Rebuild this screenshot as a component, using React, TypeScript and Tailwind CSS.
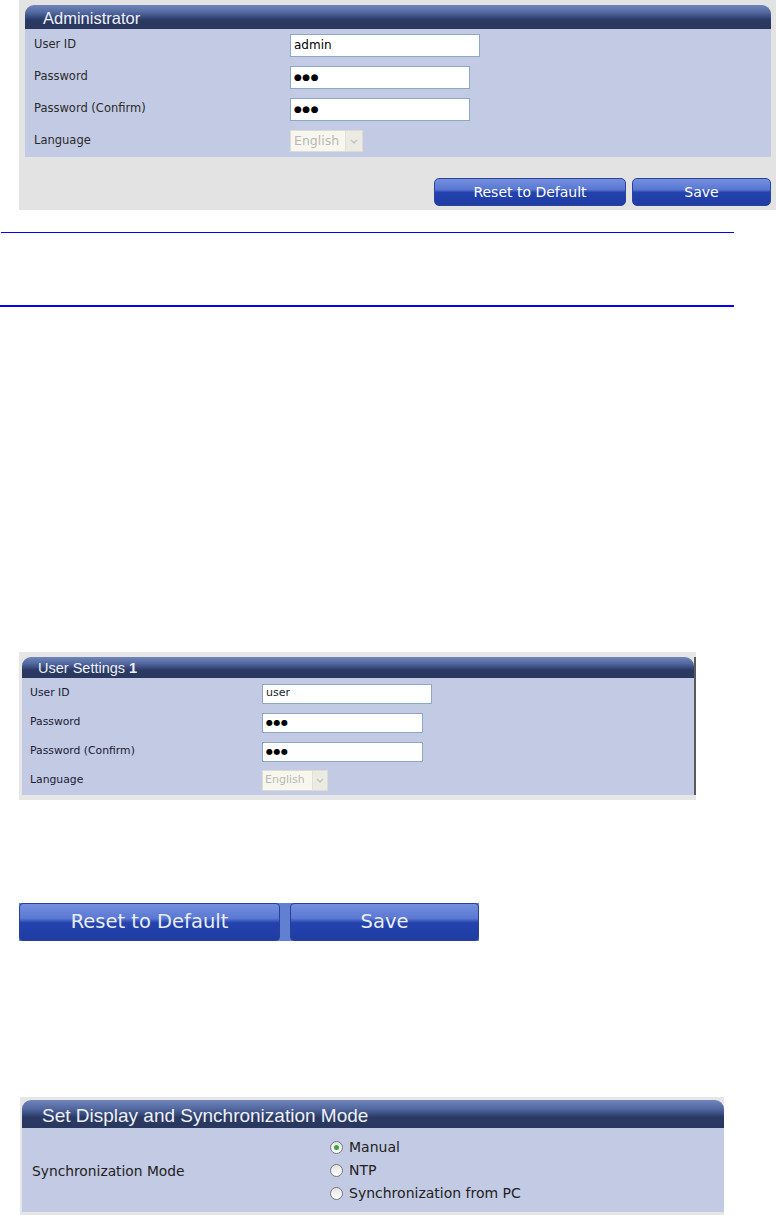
const sans = "font-['DejaVu_Sans','Verdana',sans-serif]";
const arial = "font-['Liberation_Sans',Arial,sans-serif]";

const headerBg =
  'bg-[linear-gradient(to_bottom,#7085ba_0%,#5369a0_30%,#3a4c80_50%,#2b3a62_62%,#2a3860_100%)]';
const buttonBg =
  'bg-[linear-gradient(to_bottom,#7590e0_0%,#5a78d2_40%,#2443ad_52%,#1f3ca4_100%)]';

function Dots({ size }: { size: string }) {
  return <span className={`${sans} ${size} leading-none tracking-[0.5px] text-black`}>●●●</span>;
}

function FakeSelect({ big }: { big: boolean }) {
  return (
    <div
      className={`flex items-center border border-[#dedcd0] bg-[#f8f7ef] ${
        big ? 'h-[22px] w-[73px]' : 'h-[21px] w-[66px]'
      }`}
    >
      <span className={`${sans} ${big ? 'text-[12.5px] pl-[3px]' : 'text-[11px] pl-[2px]'} flex-1 text-[#b9b9b4]`}>
        English
      </span>
      <span
        className={`flex h-full items-center justify-center border-l border-[#e2e1d8] bg-[#ecebe3] ${
          big ? 'w-[17px]' : 'w-[15px]'
        }`}
      >
        <svg width="8" height="5" viewBox="0 0 8 5">
          <path d="M1 1 L4 4 L7 1" fill="none" stroke="#c4c4bc" strokeWidth="1.4" />
        </svg>
      </span>
    </div>
  );
}

function Header({ title, h, size, pl }: { title: React.ReactNode; h: string; size: string; pl: string }) {
  return (
    <div className={`${h} ${headerBg} ${pl} rounded-t-[9px] flex items-center pt-[2px]`}>
      <span className={`${arial} ${size} text-[#eef1f8] leading-none`}>{title}</span>
    </div>
  );
}

function AdminSection() {
  const rows = [
    { label: 'User ID', field: <div className="flex h-[23px] w-[190px] items-center border border-[#8ea6c8] bg-white pl-[3px]"><span className={`${sans} text-[12px] text-black`}>admin</span></div> },
    { label: 'Password', field: <div className="flex h-[23px] w-[180px] items-center border border-[#8ea6c8] bg-white pl-[3px]"><Dots size="text-[9px]" /></div> },
    { label: 'Password (Confirm)', field: <div className="flex h-[23px] w-[180px] items-center border border-[#8ea6c8] bg-white pl-[3px]"><Dots size="text-[9px]" /></div> },
    { label: 'Language', field: <FakeSelect big /> },
  ];
  return (
    <div className="ml-[19px] h-[210px] w-[757px] bg-[#e3e3e3] pl-[6px] pr-[5px] pt-[5px]">
      <Header title="Administrator" h="h-[24px]" size="text-[16.5px]" pl="pl-[18px]" />
      <div className="h-[128px] bg-[#c3cae3]">
        {rows.map((r) => (
          <div key={r.label} className="flex h-[32px] items-center">
            <div className={`${sans} w-[265px] pl-[9px] text-[11.5px] text-[#2a2a2a]`}>{r.label}</div>
            {r.field}
          </div>
        ))}
      </div>
      <div className="mt-[21px] flex justify-end gap-[6px]">
        <button className={`${buttonBg} ${sans} h-[28px] w-[192px] rounded-[5px] border border-[#2c4399] text-[14px] text-white`}>
          Reset to Default
        </button>
        <button className={`${buttonBg} ${sans} h-[28px] w-[139px] rounded-[5px] border border-[#2c4399] text-[14px] text-white`}>
          Save
        </button>
      </div>
    </div>
  );
}

function UserSection() {
  const box = 'flex h-[20px] items-center border border-[#8ea6c8] bg-white pl-[3px]';
  const rows = [
    { label: 'User ID', field: <div className={`${box} w-[170px]`}><span className={`${sans} text-[11px] text-[#222]`}>user</span></div> },
    { label: 'Password', field: <div className={`${box} w-[161px]`}><Dots size="text-[8px]" /></div> },
    { label: 'Password (Confirm)', field: <div className={`${box} w-[161px]`}><Dots size="text-[8px]" /></div> },
    { label: 'Language', field: <FakeSelect big={false} /> },
  ];
  return (
    <div className="ml-[19px] h-[148px] w-[677px] bg-[#e6e6e6] pl-[3px] pt-[5px]">
      <div className="border-r-2 border-[#5a5a5a]">
        <Header
          title={
            <>
              User Settings <b>1</b>
            </>
          }
          h="h-[21px]"
          size="text-[14.5px]"
          pl="pl-[16px]"
        />
        <div className="h-[117px] bg-[#c3cae3] pt-px">
          {rows.map((r) => (
            <div key={r.label} className="flex h-[29px] items-center">
              <div className={`${sans} w-[240px] pl-[8px] text-[10.8px] text-[#1a1a36]`}>{r.label}</div>
              {r.field}
            </div>
          ))}
        </div>
      </div>
    </div>
  );
}

function ButtonStrip() {
  const b = `${buttonBg} ${sans} h-full rounded-[4px] border border-[#2a3f98] text-[19.5px] text-[#e9edf8]`;
  return (
    <div className="ml-[19px] flex h-[38px] w-[460px] gap-[10px] bg-[#6280d2]">
      <button className={`${b} w-[261px]`}>Reset to Default</button>
      <button className={`${b} w-[189px]`}>Save</button>
    </div>
  );
}

function Radio({ checked, label }: { checked?: boolean; label: string }) {
  return (
    <div className="flex h-[22px] items-center">
      <span className="flex h-[13px] w-[13px] items-center justify-center rounded-full border border-[#787878] bg-[linear-gradient(to_bottom,#e4e4e4,#ffffff)]">
        {checked && <span className="h-[5px] w-[5px] rounded-full bg-[#3aa53a]" />}
      </span>
      <span className={`${sans} ml-[6px] text-[14px] text-[#222]`}>{label}</span>
    </div>
  );
}

function SyncSection() {
  return (
    <div className="ml-[20px] h-[118px] w-[704px] bg-[#e6e6e6] pl-[2px] pt-[3px]">
      <Header title="Set Display and Synchronization Mode" h="h-[28px]" size="text-[19px]" pl="pl-[20px]" />
      <div className="flex h-[84px] items-center bg-[#c3cae3]">
        <div className={`${sans} w-[308px] pl-[10px] pt-[3px] text-[13.8px] text-[#222]`}>Synchronization Mode</div>
        <div className="flex flex-col gap-px">
          <Radio checked label="Manual" />
          <Radio label="NTP" />
          <Radio label="Synchronization from PC" />
        </div>
      </div>
    </div>
  );
}

export default function App() {
  return (
    <div className="h-[1215px] w-[776px] overflow-hidden bg-white">
      <AdminSection />
      <div className="ml-px mt-[22px] h-px w-[733px] bg-[#0000ff]" />
      <div className="mt-[72px] h-[2px] w-[734px] bg-[#0000ff]" />
      <div className="mt-[345px]">
        <UserSection />
      </div>
      <div className="mt-[103px]">
        <ButtonStrip />
      </div>
      <div className="mt-[156px]">
        <SyncSection />
      </div>
    </div>
  );
}
